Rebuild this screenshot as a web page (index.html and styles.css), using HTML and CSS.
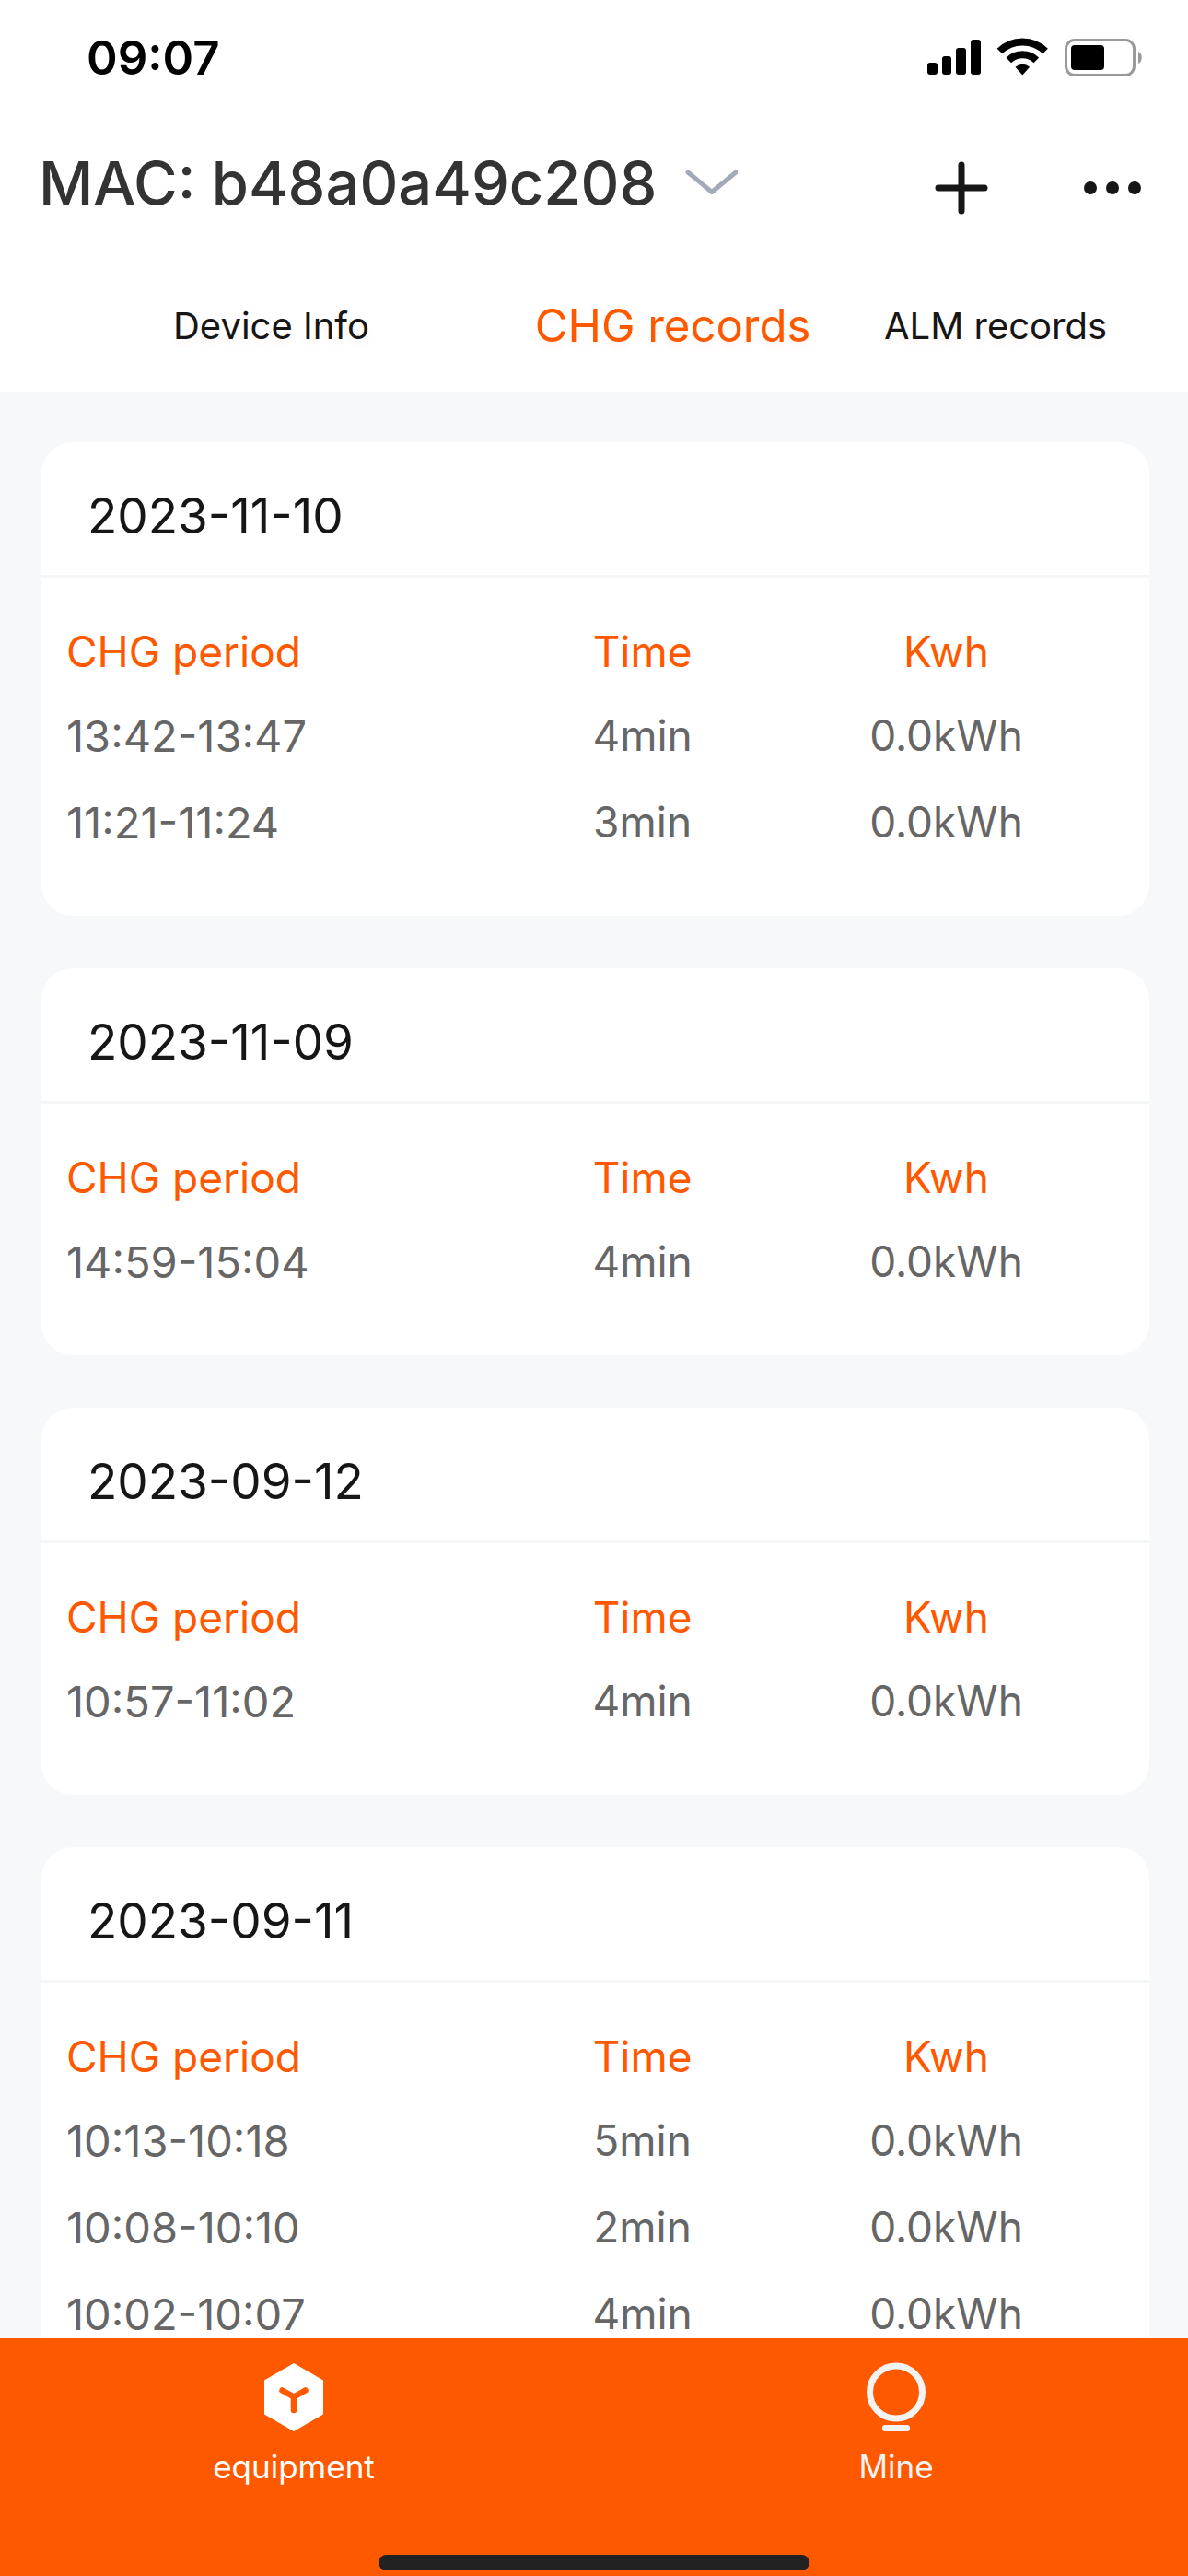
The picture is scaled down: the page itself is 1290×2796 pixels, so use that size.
FILE: index.html
```html
<!DOCTYPE html>
<html lang="en">
<head>
<meta charset="utf-8">
<meta name="viewport" content="width=device-width, initial-scale=1">
<title>CHG records</title>
<link rel="stylesheet" href="styles.css">
</head>
<body>
<div class="app">
  <div class="status-bar">
    <span class="clock">09:07</span>
    <svg class="status-icons" width="234" height="44" viewBox="0 0 234 44" aria-hidden="true">
      <rect x="0" y="28" width="11" height="13" rx="3"/>
      <rect x="16" y="21" width="10" height="20" rx="3"/>
      <rect x="31" y="12" width="11" height="29" rx="3"/>
      <rect x="47" y="3" width="11" height="38" rx="3"/>
      <g fill="none" stroke="#000" stroke-width="8">
        <path d="M78.500 15.500a35.500 35.500 0 0 1 49.600 0"/>
        <path d="M88.300 25.300a21.500 21.500 0 0 1 30 0"/>
      </g>
      <path d="M95.500 32.800a11.500 11.500 0 0 1 15.600 0L103.300 41.400z"/>
      <rect x="150.500" y="3.500" width="74" height="38" rx="9.500" fill="none" stroke="#999" stroke-width="3"/>
      <rect x="156" y="9" width="36" height="27" rx="4"/>
      <path d="M229 16c5 2 5 11 0 13z" fill="#999"/>
    </svg>
  </div>

  <header class="title-bar">
    <button class="device-picker" type="button">
      <span>MAC: b48a0a49c208</span>
      <svg width="58" height="30" viewBox="0 0 58 30" aria-hidden="true"><path d="M4 4L30 25.500L56 4" fill="none" stroke="#a3abb8" stroke-width="5" stroke-linecap="round" stroke-linejoin="round"/></svg>
    </button>
    <div class="actions">
      <button type="button" aria-label="Add">
        <svg width="58" height="58" viewBox="0 0 58 58"><path d="M29 4v50M4 29h50" stroke="#161616" stroke-width="7" stroke-linecap="round"/></svg>
      </button>
      <button type="button" aria-label="More">
        <svg width="62" height="58" viewBox="0 0 62 58" fill="#161616"><circle cx="7" cy="29" r="7"/><circle cx="31" cy="29" r="7"/><circle cx="55" cy="29" r="7"/></svg>
      </button>
    </div>
  </header>

  <nav class="tabs" aria-label="Device sections">
    <button class="tab" type="button">Device Info</button>
    <button class="tab tab-active" type="button">CHG records</button>
    <button class="tab" type="button">ALM records</button>
  </nav>

  <main class="records">
    <section class="card">
      <h2>2023-11-10</h2>
      <table>
        <thead><tr><th>CHG period</th><th>Time</th><th>Kwh</th></tr></thead>
        <tbody>
          <tr><td>13:42-13:47</td><td>4min</td><td>0.0kWh</td></tr>
          <tr><td>11:21-11:24</td><td>3min</td><td>0.0kWh</td></tr>
        </tbody>
      </table>
    </section>
    <section class="card">
      <h2>2023-11-09</h2>
      <table>
        <thead><tr><th>CHG period</th><th>Time</th><th>Kwh</th></tr></thead>
        <tbody>
          <tr><td>14:59-15:04</td><td>4min</td><td>0.0kWh</td></tr>
        </tbody>
      </table>
    </section>
    <section class="card">
      <h2>2023-09-12</h2>
      <table>
        <thead><tr><th>CHG period</th><th>Time</th><th>Kwh</th></tr></thead>
        <tbody>
          <tr><td>10:57-11:02</td><td>4min</td><td>0.0kWh</td></tr>
        </tbody>
      </table>
    </section>
    <section class="card">
      <h2>2023-09-11</h2>
      <table>
        <thead><tr><th>CHG period</th><th>Time</th><th>Kwh</th></tr></thead>
        <tbody>
          <tr><td>10:13-10:18</td><td>5min</td><td>0.0kWh</td></tr>
          <tr><td>10:08-10:10</td><td>2min</td><td>0.0kWh</td></tr>
          <tr><td>10:02-10:07</td><td>4min</td><td>0.0kWh</td></tr>
        </tbody>
      </table>
    </section>
  </main>

  <footer class="bottom-bar">
    <nav class="bottom-nav" aria-label="Main">
      <a class="nav-item nav-current" href="#equipment">
        <svg width="64" height="76" viewBox="0 0 64 76" aria-hidden="true">
          <path d="M32 1L64 19.500V56.500L32 75L0 56.500V19.500z" fill="#fff"/>
          <path d="M19.500 30.500L32 37.500L44.500 30.500M32 37.500V52" fill="none" stroke="#ff5900" stroke-width="6.500" stroke-linecap="round"/>
        </svg>
        <span>equipment</span>
      </a>
      <a class="nav-item" href="#mine">
        <svg width="64" height="76" viewBox="0 0 64 76" fill="none" aria-hidden="true">
          <circle cx="32" cy="32.500" r="28.500" stroke="#f3f3f3" stroke-width="7"/>
          <rect x="17" y="68" width="30" height="7" rx="3" fill="#f3f3f3"/>
        </svg>
        <span>Mine</span>
      </a>
    </nav>
    <div class="home-indicator"></div>
  </footer>
</div>
</body>
</html>
```
FILE: styles.css
```css
* {
  box-sizing: border-box;
}

body {
  margin: 0;
  font-family: Inter, "Liberation Sans", sans-serif;
  color: #161616;
  background: #fff;
}

button {
  margin: 0;
  padding: 0;
  border: 0;
  background: none;
  font: inherit;
  color: inherit;
  white-space: nowrap;
  cursor: pointer;
}

svg {
  display: block;
  flex: none;
}

.app {
  display: flex;
  flex-direction: column;
  height: 100vh;
}

.status-bar {
  display: flex;
  flex: none;
  align-items: center;
  justify-content: space-between;
  height: 124px;
  padding: 0 49px 0 94px;
}

.clock {
  font-size: 51px;
  font-weight: 600;
  color: #000;
}

.title-bar {
  display: flex;
  flex: none;
  align-items: center;
  justify-content: space-between;
  height: 148px;
  padding: 0 51px 0 42px;
}

.device-picker {
  display: flex;
  align-items: center;
  gap: 30px;
  font-size: 65px;
  font-weight: 500;
  color: #333;
}

.actions {
  display: flex;
  gap: 104px;
  padding-top: 12px;
}

.tabs {
  display: grid;
  flex: none;
  grid-template-columns: minmax(0, 589fr) minmax(0, 283fr) minmax(0, 418fr);
  align-items: center;
  justify-items: center;
  height: 154px;
  padding-top: 8px;
}

.tab {
  font-size: 40px;
  text-shadow: 0 6px 8px rgba(255, 89, 0, 0.06);
}

.tab-active {
  font-size: 49px;
  color: #ff5900;
}

.records {
  display: flex;
  flex: 1;
  flex-direction: column;
  gap: 57px;
  min-height: 0;
  padding: 54px 42px 0 45px;
  overflow: hidden;
  background: #f6f8fa;
}

.card {
  flex: none;
  padding-bottom: 55px;
  border-radius: 34px;
  background: #fff;
}

.card h2 {
  margin: 0;
  padding: 8px 50px 0;
  border-bottom: 3px solid #f5f6f7;
  font-size: 53px;
  font-weight: 400;
  line-height: 144px;
  height: 147px;
}

.card table {
  width: 100%;
  margin-top: 36px;
  border-collapse: collapse;
  table-layout: fixed;
}

th,
td {
  height: 94px;
  padding: 0;
  font-size: 46px;
  font-weight: 400;
  text-align: center;
  color: #666;
}

th {
  height: 88px;
  color: #ff5900;
}

th:first-child,
td:first-child {
  width: 40.5%;
  padding-left: 27px;
  text-align: left;
}

td:first-child {
  font-size: 47px;
}

th:nth-child(2),
td:nth-child(2) {
  width: 27.5%;
}

th:last-child,
td:last-child {
  padding-right: 56px;
}

.bottom-bar {
  display: flex;
  flex: none;
  flex-direction: column;
  justify-content: space-between;
  align-items: center;
  height: 258px;
  padding: 26px 0 6px;
  background: #ff5900;
}

.bottom-nav {
  display: grid;
  grid-template-columns: 1fr 1fr;
  gap: 20px;
  width: 100%;
  padding-left: 2px;
}

.nav-item {
  display: flex;
  flex-direction: column;
  align-items: center;
  gap: 16px;
  font-size: 35px;
  line-height: 42px;
  color: #f3f3f3;
  text-decoration: none;
}

.nav-current {
  color: #fff;
}

.home-indicator {
  width: 468px;
  max-width: 60%;
  height: 17px;
  border-radius: 9px;
  background: #222;
}
```
